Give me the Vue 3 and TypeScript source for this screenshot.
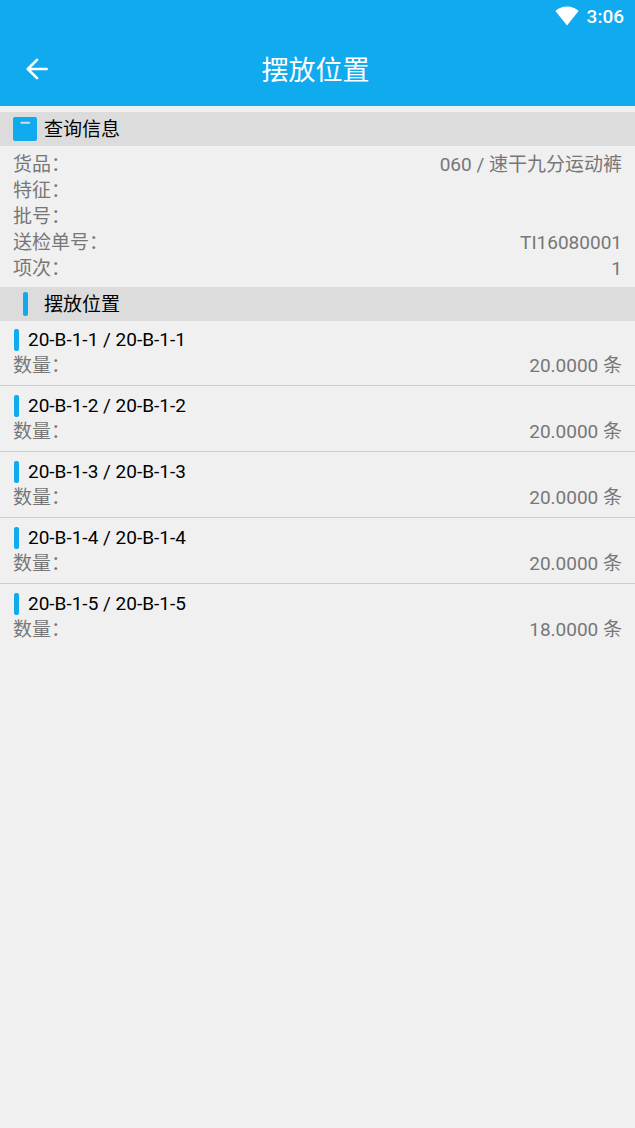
<script setup lang="ts">
interface Field {
  label: string
  value: string
}

interface Slot {
  name: string
  quantity: string
}

const fields: Field[] = [
  { label: '货品：', value: '060 / 速干九分运动裤' },
  { label: '特征：', value: '' },
  { label: '批号：', value: '' },
  { label: '送检单号：', value: 'TI16080001' },
  { label: '项次：', value: '1' },
]

const slots: Slot[] = [
  { name: '20-B-1-1 / 20-B-1-1', quantity: '20.0000 条' },
  { name: '20-B-1-2 / 20-B-1-2', quantity: '20.0000 条' },
  { name: '20-B-1-3 / 20-B-1-3', quantity: '20.0000 条' },
  { name: '20-B-1-4 / 20-B-1-4', quantity: '20.0000 条' },
  { name: '20-B-1-5 / 20-B-1-5', quantity: '18.0000 条' },
]
</script>

<template>
  <div class="screen" lang="zh-CN">
    <header class="top">
      <div class="status">
        <svg class="wifi" viewBox="0 0 24 20" aria-hidden="true">
          <path d="M12 19.5 0.4 5C3.4 2.2 7.5 0.6 12 0.6S20.6 2.2 23.6 5Z" fill="#fff" />
        </svg>
        <span class="clock">3:06</span>
      </div>
      <div class="appbar">
        <button class="back" type="button" aria-label="返回">
          <svg viewBox="0 0 24 24" aria-hidden="true">
            <path
              d="M22.5 12H3M12 2 2 12 12 22"
              fill="none"
              stroke="#fff"
              stroke-width="2.9"
              stroke-linecap="round"
              stroke-linejoin="round"
            />
          </svg>
        </button>
        <h1 class="title">摆放位置</h1>
      </div>
    </header>

    <main>
      <section>
        <h2 class="section-head">
          <span class="mark">
            <svg class="box" viewBox="0 0 24 24" aria-hidden="true">
              <rect width="24" height="24" rx="2" fill="#10aaee" />
              <rect x="7.5" y="4.8" width="9.5" height="2" rx="0.8" fill="#dcdcdc" />
            </svg>
          </span>
          <span class="section-title">查询信息</span>
        </h2>
        <dl class="fields">
          <div v-for="field in fields" :key="field.label" class="line">
            <dt>{{ field.label }}</dt>
            <dd>{{ field.value }}</dd>
          </div>
        </dl>
      </section>

      <section>
        <h2 class="section-head">
          <span class="mark"><span class="bar"></span></span>
          <span class="section-title">摆放位置</span>
        </h2>
        <ul class="slots">
          <li v-for="slot in slots" :key="slot.name" class="slot">
            <h3 class="name"><span class="tick"></span>{{ slot.name }}</h3>
            <div class="line">
              <span>数量：</span>
              <span>{{ slot.quantity }}</span>
            </div>
          </li>
        </ul>
      </section>
    </main>
  </div>
</template>

<style>
body {
  margin: 0;
  background: #f0f0f0;
}
</style>

<style scoped>
.screen {
  min-height: 100vh;
  background: #f0f0f0;
  color: #777;
  font-family: Roboto, "Noto Sans CJK SC", sans-serif;
  font-size: 19px;
  line-height: 26px;
}

h1,
h2,
h3,
dl,
dd,
ul {
  margin: 0;
  padding: 0;
  font-weight: 400;
}

.top {
  background: #10aaee;
  color: #fff;
}

.status {
  display: flex;
  align-items: center;
  justify-content: flex-end;
  gap: 8px;
  height: 32px;
  padding-right: 11px;
}

.wifi {
  width: 24px;
  height: 20px;
}

.clock {
  font-weight: 500;
  line-height: 28px;
  padding-top: 1px;
}

.appbar {
  display: grid;
  grid-template-columns: 74px 1fr 78px;
  align-items: center;
  height: 74px;
}

.back {
  display: flex;
  align-items: center;
  justify-content: center;
  height: 48px;
  padding: 0;
  border: 0;
  background: none;
  cursor: pointer;
}

.back svg {
  width: 22px;
  height: 22px;
}

.title {
  padding-top: 4px;
  font-size: 27px;
  line-height: 40px;
  text-align: center;
}

main {
  padding-top: 6px;
}

.section-head {
  display: flex;
  align-items: center;
  gap: 7px;
  height: 34px;
  padding: 0 13px;
  background: #dcdcdc;
  color: #000;
  font-size: 19px;
}

.section-title {
  padding-top: 2px;
}

.mark {
  display: flex;
  justify-content: center;
  width: 24px;
}

.box {
  width: 24px;
  height: 24px;
}

.bar {
  width: 5px;
  height: 24px;
  border-radius: 2px;
  background: #10aaee;
}

.fields {
  padding: 6px 13px 5px;
}

.line {
  display: flex;
  justify-content: space-between;
  height: 26px;
}

.slots {
  list-style: none;
}

.slot {
  padding: 6px 13px;
}

.slot + .slot {
  padding-top: 7px;
  border-top: 1px solid #cdcdcd;
}

.name {
  display: flex;
  align-items: center;
  gap: 9px;
  height: 26px;
  padding-left: 1px;
  color: #000;
  font-size: 19px;
}

.tick {
  width: 5px;
  height: 22px;
  border-radius: 2px;
  background: #10aaee;
}
</style>
